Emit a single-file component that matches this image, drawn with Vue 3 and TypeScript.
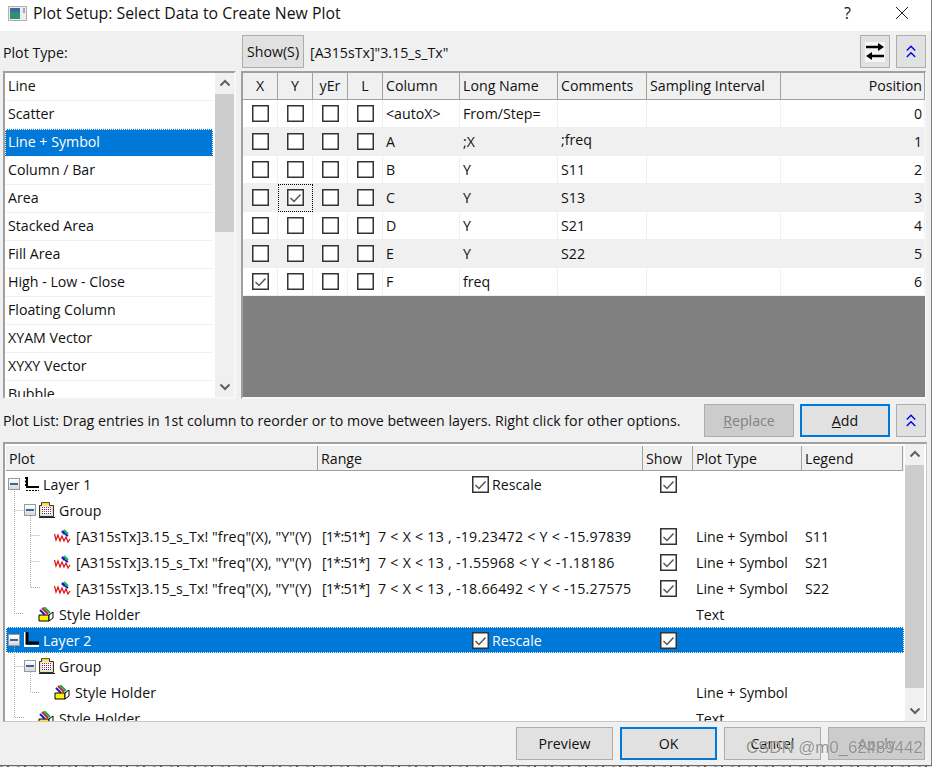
<script setup lang="ts">
const plotTypes = ['Line','Scatter','Line + Symbol','Column / Bar','Area','Stacked Area','Fill Area','High - Low - Close','Floating Column','XYAM Vector','XYXY Vector','Bubble']
const gridRows = [
  { c: '<autoX>', l: 'From/Step=', m: '', p: 0, x: false, y: false },
  { c: 'A', l: ';X', m: ';freq', p: 1, x: false, y: false },
  { c: 'B', l: 'Y', m: 'S11', p: 2, x: false, y: false },
  { c: 'C', l: 'Y', m: 'S13', p: 3, x: false, y: true },
  { c: 'D', l: 'Y', m: 'S21', p: 4, x: false, y: false },
  { c: 'E', l: 'Y', m: 'S22', p: 5, x: false, y: false },
  { c: 'F', l: 'freq', m: '', p: 6, x: true, y: false },
]
const plotName = '[A315sTx]3.15_s_Tx! "freq"(X), "Y"(Y)'
const tree = [
  { kind: 'layer', name: 'Layer 1', range: '', rescale: true, show: true, type: '', legend: '' },
  { kind: 'group', name: 'Group', range: '', rescale: false, show: false, type: '', legend: '' },
  { kind: 'plot', name: plotName, range: '7 < X < 13 , -19.23472 < Y < -15.97839', rescale: false, show: true, type: 'Line + Symbol', legend: 'S11' },
  { kind: 'plot', name: plotName, range: '7 < X < 13 , -1.55968 < Y < -1.18186', rescale: false, show: true, type: 'Line + Symbol', legend: 'S21' },
  { kind: 'plot', name: plotName, range: '7 < X < 13 , -18.66492 < Y < -15.27575', rescale: false, show: true, type: 'Line + Symbol', legend: 'S22' },
  { kind: 'holder1', name: 'Style Holder', range: '', rescale: false, show: false, type: 'Text', legend: '' },
  { kind: 'layer sel', name: 'Layer 2', range: '', rescale: true, show: true, type: '', legend: '' },
  { kind: 'group', name: 'Group', range: '', rescale: false, show: false, type: '', legend: '' },
  { kind: 'holder2', name: 'Style Holder', range: '', rescale: false, show: false, type: 'Line + Symbol', legend: '' },
  { kind: 'holder1', name: 'Style Holder', range: '', rescale: false, show: false, type: 'Text', legend: '' },
]
</script>

<template>
  <div class="app">
    <div class="window">
      <div class="title">
        <svg class="appicon" width="19" height="15" viewBox="0 0 19 15">
          <rect x=".5" y=".5" width="18" height="14" fill="#eee" stroke="#b0b0b0" />
          <rect x="2" y="2" width="10" height="11" fill="#2f8f78" />
          <rect x="2" y="2" width="10" height="4" fill="#3a6d9c" />
          <rect x="15" y="2" width="2" height="5" fill="#9ab" />
        </svg>
        <span class="title-text">Plot Setup: Select Data to Create New Plot</span>
        <span class="help">?</span>
        <svg class="close" width="14" height="14" viewBox="0 0 14 14"><path d="M1 1L13 13M13 1L1 13" stroke="#222" fill="none" /></svg>
      </div>

      <div class="toolbar">
        <span class="type-label">Plot Type:</span>
        <button class="btn show">Show(S)</button>
        <span class="book">[A315sTx]"3.15_s_Tx"</span>
        <button class="btn icon swap">
          <svg width="20" height="20" viewBox="0 0 20 20">
            <rect width="20" height="20" fill="#f6f6f6" />
            <path d="M1 5h14M5 14h14" stroke="#000" stroke-width="2.600" fill="none" />
            <path d="M13 1l6 4-6 4zM7 10l-6 4 6 4z" fill="#000" />
          </svg>
        </button>
        <button class="btn icon chev">
          <svg width="10" height="13" viewBox="0 0 10 13"><path d="M.8 5.500L5 1.300l4.200 4.200M.8 12L5 7.800 9.200 12" stroke="#0000f0" stroke-width="1.400" fill="none" /></svg>
        </button>
      </div>

      <div class="lists">
        <div class="listbox">
          <div class="items">
            <div v-for="t in plotTypes" :key="t" class="item" :class="{ sel: t === 'Line + Symbol' }">{{ t }}</div>
          </div>
          <div class="scroll">
            <svg class="arrow" width="12" height="8" viewBox="0 0 12 8"><path d="M1.500 6.500L6 2l4.500 4.500" stroke="#606060" stroke-width="2" fill="none" /></svg>
            <div class="thumb list-thumb"></div>
            <svg class="arrow end" width="12" height="8" viewBox="0 0 12 8"><path d="M1.500 1.500L6 6l4.500-4.500" stroke="#606060" stroke-width="2" fill="none" /></svg>
          </div>
        </div>

        <div class="grid">
          <div class="g-row g-head">
            <div class="c x ctr">X</div><div class="c x ctr">Y</div><div class="c x ctr">yEr</div><div class="c x ctr">L</div>
            <div class="c col">Column</div><div class="c lng">Long Name</div><div class="c com">Comments</div><div class="c smp">Sampling Interval</div><div class="c pos">Position</div>
          </div>
          <div v-for="(r, i) in gridRows" :key="r.c" class="g-row g-body" :class="{ odd: i % 2 === 1 }">
            <div class="c x ctr">
              <svg width="17" height="17" viewBox="0 0 17 17"><rect x=".75" y=".75" width="15.500" height="15.500" fill="#fff" stroke="#333" stroke-width="1.500" /><path v-if="r.x" d="M3.500 9l3.500 3.500 6.500-7" stroke="#555" stroke-width="1.500" fill="none" /></svg>
            </div>
            <div class="c x ctr" :class="{ focus: r.y }">
              <svg width="17" height="17" viewBox="0 0 17 17"><rect x=".75" y=".75" width="15.500" height="15.500" fill="#fff" stroke="#333" stroke-width="1.500" /><path v-if="r.y" d="M3.500 9l3.500 3.500 6.500-7" stroke="#555" stroke-width="1.500" fill="none" /></svg>
            </div>
            <div class="c x ctr" v-for="n in 2" :key="n">
              <svg width="17" height="17" viewBox="0 0 17 17"><rect x=".75" y=".75" width="15.500" height="15.500" fill="#fff" stroke="#333" stroke-width="1.500" /></svg>
            </div>
            <div class="c col">{{ r.c }}</div><div class="c lng">{{ r.l }}</div><div class="c com" :class="{ raised: r.m === ';freq' }">{{ r.m }}</div><div class="c smp"></div><div class="c pos">{{ r.p }}</div>
          </div>
          <div class="g-empty"></div>
        </div>
      </div>

      <div class="plot-bar">
        <span class="hint">Plot List: Drag entries in 1st column to reorder or to move between layers. Right click for other options.</span>
        <button class="btn replace" disabled><u>R</u>eplace</button>
        <button class="btn add default"><u>A</u>dd</button>
        <button class="btn icon chev">
          <svg width="10" height="13" viewBox="0 0 10 13"><path d="M.8 5.500L5 1.300l4.200 4.200M.8 12L5 7.800 9.200 12" stroke="#0000f0" stroke-width="1.400" fill="none" /></svg>
        </button>
      </div>

      <div class="treebox">
        <div class="tree-main">
          <div class="t-head">
            <div class="tc tp">Plot</div><div class="tc tr">Range</div><div class="tc ts">Show</div><div class="tc tt">Plot Type</div><div class="tc tl">Legend</div>
          </div>
          <div class="t-body">
            <div v-for="(n, i) in tree" :key="i" class="t-row" :class="n.kind">
              <div class="tc tp name">
                <span v-if="n.kind.startsWith('layer') || n.kind === 'group'" class="exp"><i></i></span>
                <svg v-if="n.kind === 'layer'" class="ic-layer" width="17" height="16" viewBox="0 0 17 16">
                  <path d="M5 1v10h12" stroke="#000" stroke-width="2" fill="none" />
                  <path d="M3.500 1v10" stroke="#000" stroke-dasharray="2 1.500" fill="none" />
                  <path d="M4 14.500h13" stroke="#000" stroke-dasharray="2 1" fill="none" />
                </svg>
                <svg v-else-if="n.kind === 'layer sel'" class="ic-layer" width="17" height="16" viewBox="0 0 17 16">
                  <path d="M2 0h2v13h13v2H2z" fill="#fff" />
                  <path d="M5 0v11h12" stroke="#000" stroke-width="3" fill="none" />
                </svg>
                <svg v-else-if="n.kind === 'group'" class="ic-group" width="16" height="16" viewBox="0 0 16 16">
                  <path d="M.5 3.500h2V.5h8v3h4v11H.5z" fill="#ecdfae" stroke="#333" />
                  <path d="M3 1.500h7" stroke="#f0e000" stroke-width="1.500" />
                  <rect x="2.500" y="4.500" width="10" height="8" fill="#fff" />
                  <path d="M3 5.500h9M3 9.500h9" stroke="#e02020" stroke-dasharray="1 1" />
                  <path d="M3 7.500h9M3 11.500h9" stroke="#2020d0" stroke-dasharray="1 1" />
                  <path d="M0 15.500h16" stroke="#222" />
                </svg>
                <svg v-else-if="n.kind === 'plot'" class="ic-plot" width="18" height="14" viewBox="0 0 18 14">
                  <path d="M.5 5l1.500 6 2-5 2 6 2-5 2 5 2-4 2 5 2-3" stroke="#e01010" stroke-width="1.200" fill="none" />
                  <path d="M8 2l3 3" stroke="#1818d0" stroke-width="2.500" />
                  <path d="M10 1l4 4" stroke="#10c040" stroke-width="2" />
                  <path d="M11 5l3 2" stroke="#1818d0" stroke-width="2" />
                </svg>
                <svg v-else class="ic-holder" :class="n.kind" width="17" height="15" viewBox="0 0 17 15">
                  <path d="M1 8h10v6H1z" fill="#fff200" stroke="#000" />
                  <path d="M11 8l4-3v6l-4 3z" fill="#fff" stroke="#000" />
                  <path d="M4 1l6 6" stroke="#d02020" stroke-width="2" />
                  <path d="M6 0l6 6" stroke="#10b040" stroke-width="2" />
                  <path d="M2 3l5 5" stroke="#1818d0" stroke-width="2" />
                </svg>
                <span class="lbl">{{ n.name }}</span>
              </div>
              <div class="tc tr rng">
                <span v-if="n.range" class="rtext idx">[1*:51*]</span>
                <span v-if="n.range" class="rtext cond">{{ n.range }}</span>
                <span v-if="n.rescale" class="rescale">
                  <svg width="17" height="17" viewBox="0 0 17 17"><rect x=".75" y=".75" width="15.500" height="15.500" fill="#fff" stroke="#333" stroke-width="1.500" /><path d="M3.500 9l3.500 3.500 6.500-7" stroke="#555" stroke-width="1.500" fill="none" /></svg>
                  <span class="rtext">Rescale</span>
                </span>
              </div>
              <div class="tc ts ctr">
                <svg v-if="n.show" width="17" height="17" viewBox="0 0 17 17"><rect x=".75" y=".75" width="15.500" height="15.500" fill="#fff" stroke="#333" stroke-width="1.500" /><path d="M3.500 9l3.500 3.500 6.500-7" stroke="#555" stroke-width="1.500" fill="none" /></svg>
              </div>
              <div class="tc tt">{{ n.type }}</div>
              <div class="tc tl">{{ n.legend }}</div>
            </div>
            <svg class="connect" width="60" height="250" viewBox="0 0 60 250">
              <path d="M8.500 20V142.500H18M8.500 39.500H18M24.500 45V116.500H34M24.500 64.500H34M24.500 90.500H34M8.500 175V246.500H18M8.500 195.500H18M24.500 201V221.500H34" stroke="#aaa" stroke-dasharray="1 1" fill="none" />
            </svg>
          </div>
        </div>
        <div class="scroll tree-scroll">
          <svg class="arrow" width="12" height="8" viewBox="0 0 12 8"><path d="M1.500 6.500L6 2l4.500 4.500" stroke="#606060" stroke-width="2" fill="none" /></svg>
          <div class="thumb tree-thumb"></div>
          <svg class="arrow end" width="12" height="8" viewBox="0 0 12 8"><path d="M1.500 1.500L6 6l4.500-4.500" stroke="#606060" stroke-width="2" fill="none" /></svg>
        </div>
      </div>

      <div class="footer">
        <button class="btn foot">Preview</button>
        <button class="btn foot default">OK</button>
        <button class="btn foot">Cancel</button>
        <button class="btn foot off" disabled>Apply</button>
      </div>
    </div>
    <div class="strip"></div>
    <div class="watermark">CSDN @m0_62489442</div>
  </div>
</template>

<style>
html, body { margin: 0; background: #fff; }
</style>

<style scoped>
.app { position: relative; width: 937px; height: 767px; overflow: hidden; background: #fff; font: 14.2px/20px "Open Sans", "Noto Sans", sans-serif; color: #111; }
.window { box-sizing: border-box; width: 932px; height: 766px; background: #f0f0f0; border-right: 1px solid #808080; border-bottom: 1px solid #666; display: flex; flex-direction: column; }
.strip { width: 932px; height: 1px; background: repeating-linear-gradient(90deg, #999 0 3px, #ddd 3px 7px, #555 7px 9px, #ddd 9px 17px); }
.title { box-sizing: border-box; height: 31px; padding-bottom: 5px; background: #fff; display: flex; align-items: center; flex: none; }
.appicon { margin-left: 8px; }
.title-text { margin-left: 6px; font-size: 15.8px; }
.help { margin-left: auto; font-size: 16px; margin-right: 44px; }
.close { margin-right: 22px; }
.btn { box-sizing: border-box; font: inherit; color: #111; background: #e1e1e1; border: 1px solid #adadad; padding: 0; margin: 0; }
.toolbar { box-sizing: border-box; height: 40px; padding: 1px 0 0 3px; flex: none; display: flex; align-items: center; }
.type-label { width: 239px; padding-top: 2px; }
.show { width: 62px; height: 33px; }
.book { margin-left: 6px; padding-top: 2px; }
.icon { width: 30px; height: 33px; display: flex; align-items: center; justify-content: center; }
.swap { margin-left: auto; }
.chev { margin-left: 6px; margin-right: 5px; }
.lists { height: 328px; flex: none; display: flex; padding-left: 3px; gap: 5px; }
.listbox { box-sizing: border-box; width: 233px; height: 328px; display: flex; border: 2px solid #a0a0a0; border-right-color: #f8f8f8; border-bottom-color: #f8f8f8; background: #fff; }
.items { flex: 1; overflow: hidden; margin-right: 2px; }
.item { box-sizing: border-box; height: 28px; border-bottom: 1px solid #f0f0f0; padding: 3px 3px 0; }
.item.sel { background: #0078d7; color: #fff; outline: 1px dotted #fff; outline-offset: -1px; }
.scroll { width: 19px; background: #f0f0f0; display: flex; flex-direction: column; align-items: center; flex: none; }
.arrow { margin: 6px 0 7px; flex: none; }
.arrow.end { margin: auto 0 6px; }
.thumb { width: 100%; background: #cdcdcd; flex: none; }
.list-thumb { height: 138px; }
.grid { box-sizing: border-box; width: 685px; height: 328px; border: 2px solid #a0a0a0; border-right: 1px solid #f8f8f8; border-bottom-color: #f8f8f8; background: #808080; display: flex; flex-direction: column; overflow: hidden; }
.g-row { display: flex; flex: none; background: #fff; }
.g-head { height: 27px; background: #f0f0f0; }
.g-head .c { border-right: 1px solid #a0a0a0; border-bottom: 1px solid #a0a0a0; }
.g-body { height: 28px; }
.g-body.odd { background: #f0f0f0; }
.g-body .c { border-right: 1px solid #f0f0f0; border-bottom: 1px solid #f0f0f0; }
.c { box-sizing: border-box; display: flex; align-items: center; padding-left: 3px; flex: none; }
.x { width: 35px; padding: 0; }
.ctr { justify-content: center; }
.col { width: 77px; }
.lng { width: 98px; }
.com { width: 89px; }
.com.raised { padding-bottom: 4px; }
.smp { width: 134px; }
.pos { width: 144px; justify-content: flex-end; padding: 0 2px 0 0; }
.focus { outline: 1px dotted #000; outline-offset: -1px; }
.plot-bar { height: 43px; flex: none; display: flex; align-items: center; padding-left: 3px; }
.hint { width: 701px; white-space: nowrap; }
.replace { width: 90px; height: 33px; background: #cccccc; color: #838383; }
.add { width: 90px; height: 33px; margin-left: 6px; }
.default { border: 2px solid #0078d7; }
.treebox { box-sizing: border-box; margin-left: 3px; width: 924px; height: 280px; flex: none; display: flex; border: 2px solid #a0a0a0; border-right: 1px solid #c8c8c8; border-bottom: 1px solid #c8c8c8; background: #fff; }
.tree-main { width: 898px; flex: none; padding-left: 1px; overflow: hidden; }
.t-head { display: flex; height: 25px; background: #f0f0f0; margin-top: 2px; }
.t-head .tc { border-right: 1px solid #a0a0a0; border-bottom: 1px solid #a0a0a0; padding: 2px 0 0 3px; }
.tc { box-sizing: border-box; flex: none; display: flex; align-items: center; white-space: nowrap; padding-left: 3px; }
.tp { width: 312px; }
.tr { width: 325px; }
.ts { width: 50px; padding: 0; }
.tt { width: 109px; padding-top: 2px; }
.tl { width: 101px; padding-top: 2px; }
.t-body { position: relative; height: 250px; overflow: hidden; }
.t-row { display: flex; height: 26px; }
.t-row.sel { background: #0078d7; color: #fff; outline: 1px dotted #fff; outline-offset: -1px; }
.name { padding: 0; }
.exp { box-sizing: border-box; width: 12px; height: 12px; border: 1px solid #999; background: linear-gradient(#fff, #d8d8d8); display: flex; align-items: center; justify-content: center; flex: none; }
.exp i { width: 8px; height: 2px; background: #3f5fa8; }
.layer .exp { margin-left: 2px; }
.group .exp { margin-left: 18px; }
.ic-layer { margin-left: 2px; }
.ic-group { margin-left: 3px; }
.ic-plot { margin-left: 48px; }
.ic-holder.holder1 { margin-left: 32px; }
.ic-holder.holder2 { margin-left: 48px; }
.lbl { margin-left: 4px; padding-top: 2px; letter-spacing: .08px; }
.rng { padding-left: 4px; }
.rtext { padding-top: 2px; white-space: pre; }
.idx { width: 56px; letter-spacing: -.7px; flex: none; }
.cond { letter-spacing: .26px; }
.rescale { margin-left: 150px; display: flex; align-items: center; gap: 3px; }
.connect { position: absolute; left: 0; top: 0; pointer-events: none; }
.tree-scroll { margin-left: 1px; }
.tree-thumb { height: 223px; }
.footer { flex: 1; display: flex; gap: 7px; align-items: center; justify-content: flex-end; padding-right: 6px; }
.foot { width: 97px; height: 33px; }
.off { background: #cccccc; color: #838383; }
.watermark { position: absolute; left: 746px; top: 737px; font: 16.8px/22px "Liberation Sans", sans-serif; color: rgba(115,115,115,.8); text-shadow: 0 0 1px #fff; white-space: nowrap; }
</style>
